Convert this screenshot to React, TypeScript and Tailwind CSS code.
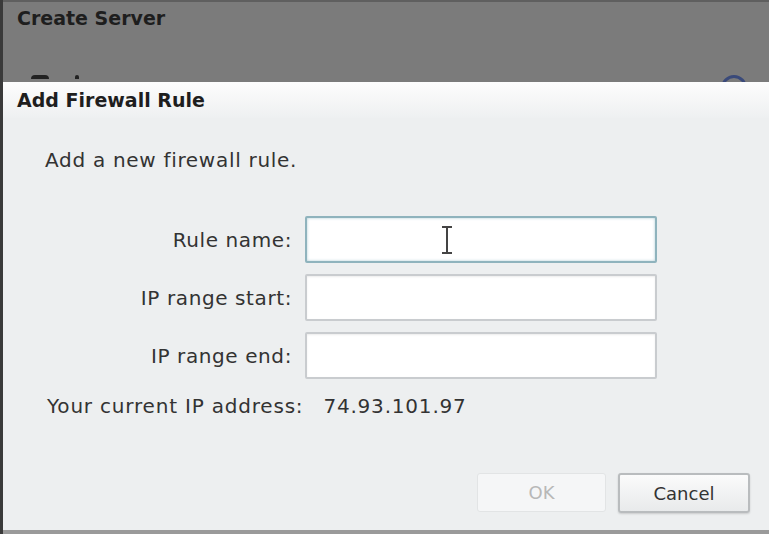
import React from "react";

const font = { fontFamily: '"DejaVu Sans", Verdana, sans-serif' };

function Field({ label, focused }: { label: string; focused?: boolean }) {
  return (
    <div className="flex items-center">
      <label className="w-[289px] text-right text-[20px] leading-[24px] tracking-[0.6px] text-[#333]">{label}</label>
      <div
        className={
          "ml-[13px] h-[47px] w-[352px] rounded-[2px] border-2 bg-white " +
          (focused
            ? "border-[#8fb3bd] shadow-[inset_0_0_3px_rgba(120,170,185,0.6)]"
            : "border-[#c9cccf] shadow-[inset_0_1px_2px_rgba(0,0,0,0.08)]")
        }
      >
        {focused && (
          <div className="flex h-full items-center pl-[133px]">
            <svg width="14" height="30" viewBox="0 0 14 30">
              <path d="M2 2h10M7 2v26M2 28h10" stroke="#444" strokeWidth="2" fill="none" />
            </svg>
          </div>
        )}
      </div>
    </div>
  );
}

export default function App() {
  return (
    <div className="flex h-[534px] w-[769px] flex-col overflow-hidden border-l-[3px] border-[#3a3a3a] bg-[#7b7b7b]" style={font}>
      <div className="h-[82px] shrink-0 overflow-hidden border-t-2 border-[#5f5f5f]">
        <div className="pl-[14px] pt-[3px] text-[19px] font-bold leading-[26px] text-[#1e1e1e]">Create Server</div>
        <div className="mt-[44px] flex items-start justify-between pl-[28px] pr-[22px]">
          <div className="flex gap-[26px]">
            <span className="h-[4px] w-[18px] rounded-t-full bg-[#222]" />
            <span className="h-[4px] w-[4px] rounded-t-full bg-[#222]" />
          </div>
          <span className="h-[26px] w-[26px] rounded-full border-[3px] border-[#3a4a7a]" />
        </div>
      </div>

      <div className="flex flex-1 flex-col bg-[#edeff0]">
        <div className="flex h-[36px] items-center bg-gradient-to-b from-[#fdfdfd] to-[#eef0f1] pl-[14px] text-[19px] font-bold text-[#1e1e1e]">
          Add Firewall Rule
        </div>
        <div className="flex flex-1 flex-col border-b-4 border-[#9a9a9a]">
          <p className="ml-[42px] mt-[30px] text-[20px] leading-[24px] tracking-[0.7px] text-[#333]">Add a new firewall rule.</p>
          <div className="mt-[44px] flex flex-col gap-[11px]">
            <Field label="Rule name:" focused />
            <Field label="IP range start:" />
            <Field label="IP range end:" />
          </div>
          <p className="ml-[44px] mt-[15px] text-[20px] leading-[24px] tracking-[0.8px] text-[#333]">
            Your current IP address:<span className="ml-[20px]">74.93.101.97</span>
          </p>
          <div className="mt-[55px] flex justify-end gap-[12px] pr-[19px]">
            <button className="h-[39px] w-[129px] rounded-[3px] border border-[#e2e4e5] bg-[#f5f6f7] text-[18px] text-[#b8b8b8]">
              OK
            </button>
            <button className="h-[40px] w-[132px] rounded-[3px] border-2 border-[#b9bcbe] bg-gradient-to-b from-[#fbfbfb] to-[#e8eaeb] text-[18px] text-[#333] shadow-[0_1px_2px_rgba(0,0,0,0.15)]">
              Cancel
            </button>
          </div>
        </div>
      </div>
    </div>
  );
}
